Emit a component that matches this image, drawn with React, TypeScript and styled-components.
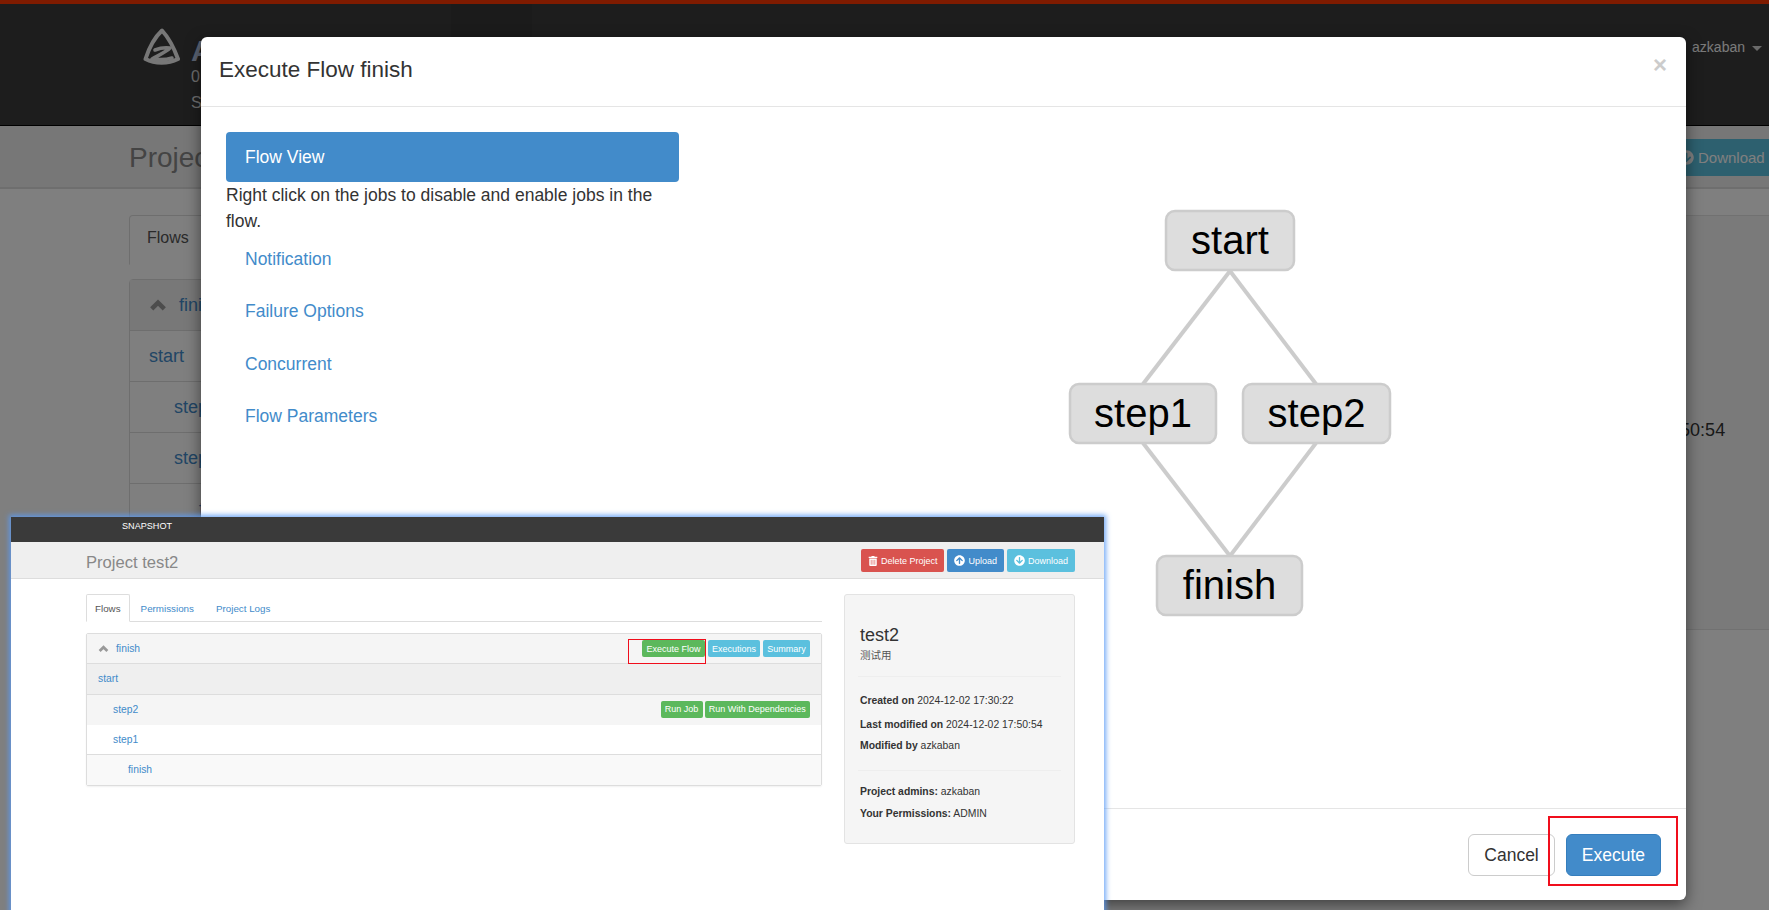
import React from "react";
import styled, { createGlobalStyle } from "styled-components";
import { FaTrashAlt, FaArrowCircleUp, FaArrowCircleDown } from "react-icons/fa";

const GlobalStyle = createGlobalStyle`
	html, body {
		margin: 0;
		padding: 0;
		overflow: hidden;
		background: #fff;
	}
	* {
		box-sizing: border-box;
	}
`;

const Screen = styled.div`
	position: relative;
	width: 1769px;
	height: 910px;
	overflow: hidden;
	font-family: "Liberation Sans", Arial, sans-serif;
	color: #333;
`;

/* page behind the dialog */
const TopBar = styled.header`
	display: flex;
	height: 126px;
	border-top: 4px solid #ff3601;
	border-bottom: 1px solid #000;
	background: #3a3a3a;
	padding-left: 142px;
`;

const Brand = styled.div`
	display: flex;
	gap: 9px;
	padding-top: 24px;
	width: 309px;
	svg {
		flex: none;
	}
	color: #fff;
	h1 {
		margin: 7px 0 0;
		font-size: 30px;
		line-height: 32px;
		color: #b8c8e6;
	}
	p {
		margin: 0;
		font-size: 16px;
		line-height: 20px;
		color: #ddd;
	}
	small {
		display: block;
		margin-top: 6px;
		font-size: 16px;
		line-height: 20px;
		color: #ddd;
	}
`;

const ActiveNav = styled.div`
	width: 81px;
	height: 33px;
	background: #363636;
`;

const UserMenu = styled.div`
	display: flex;
	align-items: flex-start;
	gap: 7px;
	margin-left: auto;
	padding: 33px 7px 0 0;
	font-size: 14px;
	line-height: 20px;
	color: #fff;
	opacity: 0.95;
	i {
		margin-top: 9px;
		border-top: 5px solid #ddd;
		border-left: 5px solid transparent;
		border-right: 5px solid transparent;
	}
`;

const ProjectBar = styled.div`
	display: flex;
	justify-content: space-between;
	align-items: flex-start;
	height: 63px;
	padding: 13px 0 0 129px;
	background: #efefef;
	border-bottom: 2px solid #ddd;
	h2 {
		margin: 2px 0 0;
		font-size: 28px;
		font-weight: 400;
		line-height: 34px;
		color: #888;
	}
`;

const BarDownload = styled.div`
	display: flex;
	align-items: center;
	gap: 4px;
	height: 37px;
	width: 120px;
	padding-left: 30px;
	background: #5bc0de;
	color: #fff;
	font-size: 15px;
	white-space: nowrap;
`;

const PageBody = styled.div`
	display: grid;
	grid-template-columns: 1150px 1fr;
	gap: 103px;
	padding: 26px 0 0 129px;
`;

const Tabs = styled.div`
	display: flex;
	height: 50px;
	border-bottom: 1px solid #ddd;
`;

const ActiveTab = styled.div`
	height: 50px;
	padding: 12px 17px;
	font-size: 16px;
	line-height: 20px;
	color: #555;
	background: #fff;
	border: 1px solid #ddd;
	border-bottom-color: #fff;
	border-radius: 4px 4px 0 0;
`;

const FlowPanel = styled.div`
	margin-top: 14px;
	border: 1px solid #ddd;
	border-radius: 4px 4px 0 0;
`;

const FlowHeading = styled.div`
	display: flex;
	align-items: center;
	gap: 12px;
	height: 51px;
	padding-left: 19px;
	background: #f0f0f0;
	border-bottom: 1px solid #ddd;
	font-size: 18px;
	color: #428bca;
`;

const FlowRow = styled.div<{ $indent: number }>`
	display: flex;
	align-items: center;
	height: 51px;
	padding-left: ${(p) => p.$indent}px;
	border-bottom: 1px solid #ddd;
	font-size: 18px;
	color: #428bca;
`;

const InfoCard = styled.aside`
	height: 415px;
	padding: 201px 0 0 27px;
	background: #f5f5f5;
	border-top: 1px solid #e3e3e3;
	border-bottom: 1px solid #e3e3e3;
	font-size: 18px;
	line-height: 26px;
`;

const Overlay = styled.div`
	position: absolute;
	inset: 0;
	background: rgba(0, 0, 0, 0.5);
`;

/* dialog */
const Modal = styled.section`
	position: absolute;
	left: 201px;
	top: 37px;
	width: 1485px;
	height: 863px;
	display: flex;
	flex-direction: column;
	background: #fff;
	border-radius: 6px;
	box-shadow: 0 5px 15px rgba(0, 0, 0, 0.5);
`;

const ModalHeader = styled.div`
	display: flex;
	justify-content: space-between;
	align-items: flex-start;
	height: 70px;
	padding: 19px 19px 0 18px;
	border-bottom: 1px solid #e5e5e5;
	h3 {
		margin: 0;
		font-size: 22.5px;
		font-weight: 400;
		line-height: 28px;
		color: #333;
	}
`;

const CloseGlyph = styled.span`
	font-size: 24px;
	font-weight: 700;
	line-height: 20px;
	margin-top: -1px;
	color: #ccc;
`;

const ModalBody = styled.div`
	flex: 1;
	display: flex;
	padding: 25px 0 0 25px;
`;

const SideNav = styled.nav`
	flex: none;
	width: 453px;
	font-size: 17.5px;
	line-height: 26px;
`;

const NavItem = styled.div<{ $active?: boolean }>`
	height: ${(p) => (p.$active ? 50 : 52.3)}px;
	padding: ${(p) => (p.$active ? 12 : 13)}px 19px;
	border-radius: 4px;
	color: ${(p) => (p.$active ? "#fff" : "#428bca")};
	background: ${(p) => (p.$active ? "#428bca" : "transparent")};
`;

const NavHint = styled.p`
	margin: 0 0 -1px;
	color: #333;
`;

const GraphSvg = styled.svg`
	flex: none;
	margin: 79px 0 0 391px;
	overflow: visible;
	text {
		font-size: 40px;
		fill: #000;
		text-anchor: middle;
	}
	rect {
		fill: #ddd;
		stroke: #ccc;
		stroke-width: 2.5px;
	}
	line {
		stroke: #ccc;
		stroke-width: 4px;
	}
`;

const ModalFooter = styled.div`
	display: flex;
	justify-content: flex-end;
	align-items: flex-start;
	gap: 11px;
	height: 92px;
	padding: 25px 25px 0 0;
	border-top: 1px solid #e5e5e5;
`;

const FooterButton = styled.div<{ $primary?: boolean }>`
	height: 42px;
	padding: 0 15px;
	display: flex;
	align-items: center;
	font-size: 17.5px;
	border-radius: 6px;
	color: ${(p) => (p.$primary ? "#fff" : "#333")};
	background: ${(p) => (p.$primary ? "#428bca" : "#fff")};
	border: 1px solid ${(p) => (p.$primary ? "#357ebd" : "#ccc")};
`;

const RedMark = styled.div<{ $top: number; $left: number; $w: number; $h: number; $b?: number }>`
	position: absolute;
	top: ${(p) => p.$top}px;
	left: ${(p) => p.$left}px;
	width: ${(p) => p.$w}px;
	height: ${(p) => p.$h}px;
	border: ${(p) => p.$b ?? 2}px solid #f00e1c;
	pointer-events: none;
`;

/* pasted screenshot lying over the dialog */
const Snapshot = styled.div`
	position: absolute;
	left: 11px;
	top: 517px;
	width: 1093px;
	height: 400px;
	background: #fff;
	box-shadow: 0 0 5px 2px rgba(90, 155, 245, 0.85);
	font-size: 10px;
`;

const SnapBar = styled.div`
	display: flex;
	height: 25px;
	background: #3a3a3a;
	color: #fff;
	padding: 3px 0 0 111px;
	font-size: 9.1px;
	line-height: 12px;
`;

const SnapTitleRow = styled.div`
	display: flex;
	align-items: flex-start;
	justify-content: space-between;
	height: 37px;
	padding: 7px 29px 0 75px;
	background: #efefef;
	border-bottom: 1px solid #ddd;
	h2 {
		margin: 4px 0 0;
		font-size: 16.6px;
		font-weight: 400;
		line-height: 20px;
		color: #888;
	}
`;

const SmallButtons = styled.div<{ $gap?: number }>`
	display: flex;
	gap: ${(p) => p.$gap ?? 3}px;
	align-items: center;
`;

const SmallButton = styled.div<{ $color: string; $h: number }>`
	display: flex;
	align-items: center;
	gap: 3px;
	height: ${(p) => p.$h}px;
	padding: 0 4.2px;
	border-radius: 2px;
	background: ${(p) => p.$color};
	color: #fff;
	font-size: 9px;
	white-space: nowrap;
`;

const TopButton = styled(SmallButton)`
	padding: 0 7px;
	font-size: 9px;
	svg {
		flex: none;
	}
`;

const SnapBody = styled.div`
	display: grid;
	grid-template-columns: 736px 231px;
	gap: 22px;
	padding: 15px 29px 0 75px;
`;

const SnapTabs = styled.div`
	display: flex;
	height: 28px;
	border-bottom: 1px solid #ddd;
`;

const SnapTab = styled.div<{ $active?: boolean }>`
	height: ${(p) => (p.$active ? 28 : 27)}px;
	padding: 8px ${(p) => (p.$active ? 8 : 10)}px;
	font-size: 9.8px;
	line-height: 12px;
	color: ${(p) => (p.$active ? "#555" : "#428bca")};
	background: #fff;
	border: 1px solid ${(p) => (p.$active ? "#ddd" : "transparent")};
	border-bottom-color: ${(p) => (p.$active ? "#fff" : "transparent")};
	border-radius: 2px 2px 0 0;
`;

const SnapPanel = styled.div`
	margin-top: 11px;
	border: 1px solid #ddd;
	border-radius: 2px;
	box-shadow: 0 1px 2px rgba(0, 0, 0, 0.06);
`;

const SnapRow = styled.div<{ $bg: string; $indent: number; $line?: boolean }>`
	display: flex;
	align-items: center;
	justify-content: space-between;
	height: 30.3px;
	padding: 0 11px 0 ${(p) => p.$indent}px;
	background: ${(p) => p.$bg};
	border-bottom: 1px solid ${(p) => (p.$line ? "#ddd" : "transparent")};
	color: #428bca;
	font-size: 10.3px;
`;

const RowName = styled.span`
	display: flex;
	align-items: center;
	gap: 7px;
`;

const SnapCard = styled.aside`
	height: 250px;
	padding: 30px 15px 0;
	background: #f5f5f5;
	border: 1px solid #e3e3e3;
	border-radius: 3px;
	font-size: 10px;
	h3 {
		margin: 0;
		font-size: 18px;
		font-weight: 400;
		line-height: 20px;
		color: #333;
	}
`;

const SnapDesc = styled.div`
	margin-top: 1px;
	height: 17px;
	font-family: "Noto Sans CJK SC", "Liberation Sans", sans-serif;
	font-size: 10.5px;
	line-height: 17px;
	color: #555;
`;

const CardRule = styled.hr<{ $space: number }>`
	margin: ${(p) => p.$space}px -2px 0;
	border: 0;
	border-top: 1px solid #eee;
`;

const CardLine = styled.div<{ $top: number }>`
	margin-top: ${(p) => p.$top}px;
	font-size: 10.4px;
	line-height: 12px;
	white-space: nowrap;
	color: #333;
	b {
		font-weight: 700;
	}
`;

function AzkabanLogo() {
	return (
		<svg width="40" height="38" viewBox="0 0 40 38" fill="none">
			<path
				d="M20 2.5 C26 9 32 20 36 31 C26 36 13 36 3.5 31 C7 20 13 9 20 2.5 Z"
				stroke="#eee"
				strokeWidth="4"
				strokeLinejoin="round"
			/>
			<path
				d="M13 22 C18 20 24 19.5 28 20 C24 24 17 27 10 31 C17 32 24 32 30 30"
				stroke="#eee"
				strokeWidth="3.6"
				strokeLinecap="round"
				strokeLinejoin="round"
			/>
		</svg>
	);
}

// solid glyphicon style chevron
function ChevronUp({ size }: { size: number }) {
	return (
		<svg width={size} height={size * 0.7} viewBox="0 0 20 14" fill="none">
			<polyline points="3,11 10,4 17,11" stroke="#999" strokeWidth="5" />
		</svg>
	);
}

const nodes = [
	{ label: "start", x: 0, y: 0, w: 128 },
	{ label: "step1", x: -96, y: 173, w: 146 },
	{ label: "step2", x: 77, y: 173, w: 147 },
	{ label: "finish", x: -9, y: 345, w: 145 },
];

function FlowGraph() {
	return (
		<GraphSvg width="320" height="410" viewBox="-96 0 320 410">
			<line x1="64" y1="60" x2="-23" y2="173" />
			<line x1="64" y1="60" x2="150" y2="173" />
			<line x1="-23" y1="232" x2="64" y2="345" />
			<line x1="150" y1="232" x2="64" y2="345" />
			{nodes.map((n) => (
				<g key={n.label}>
					<rect x={n.x} y={n.y} width={n.w} height={59} rx={9} />
					<text x={n.x + n.w / 2} y={n.y + 43}>
						{n.label}
					</text>
				</g>
			))}
		</GraphSvg>
	);
}

export default function App() {
	return (
		<Screen>
			<GlobalStyle />
			<TopBar>
				<Brand>
					<AzkabanLogo />
					<div>
						<h1>Azkaban</h1>
						<p>0.1.0</p>
						<small>SNAPSHOT</small>
					</div>
				</Brand>
				<ActiveNav />
				<UserMenu>
					azkaban <i />
				</UserMenu>
			</TopBar>
			<ProjectBar>
				<h2>Project test2</h2>
				<BarDownload>
					<FaArrowCircleDown size={15} /> Download
				</BarDownload>
			</ProjectBar>
			<PageBody>
				<div>
					<Tabs>
						<ActiveTab>Flows</ActiveTab>
					</Tabs>
					<FlowPanel>
						<FlowHeading>
							<ChevronUp size={18} /> finish
						</FlowHeading>
						<FlowRow $indent={19}>start</FlowRow>
						<FlowRow $indent={44}>step2</FlowRow>
						<FlowRow $indent={44}>step1</FlowRow>
						<FlowRow $indent={69}>finish</FlowRow>
					</FlowPanel>
				</div>
				<InfoCard>
					<b>Last modified on</b> 2024-12-02 17:50:54
				</InfoCard>
			</PageBody>
			<Overlay />

			<Modal>
				<ModalHeader>
					<h3>Execute Flow finish</h3>
					<CloseGlyph>×</CloseGlyph>
				</ModalHeader>
				<ModalBody>
					<SideNav>
						<NavItem $active>Flow View</NavItem>
						<NavHint>Right click on the jobs to disable and enable jobs in the flow.</NavHint>
						<NavItem>Notification</NavItem>
						<NavItem>Failure Options</NavItem>
						<NavItem>Concurrent</NavItem>
						<NavItem>Flow Parameters</NavItem>
					</SideNav>
					<FlowGraph />
				</ModalBody>
				<ModalFooter>
					<FooterButton>Cancel</FooterButton>
					<FooterButton $primary>Execute</FooterButton>
				</ModalFooter>
			</Modal>
			<RedMark $top={816} $left={1548} $w={130} $h={70} />

			<Snapshot>
				<SnapBar>SNAPSHOT</SnapBar>
				<SnapTitleRow>
					<h2>Project test2</h2>
					<SmallButtons>
						<TopButton $color="#d9534f" $h={23}>
							<FaTrashAlt size={10} /> Delete Project
						</TopButton>
						<TopButton $color="#428bca" $h={23}>
							<FaArrowCircleUp size={11} /> Upload
						</TopButton>
						<TopButton $color="#5bc0de" $h={23}>
							<FaArrowCircleDown size={11} /> Download
						</TopButton>
					</SmallButtons>
				</SnapTitleRow>
				<SnapBody>
					<div>
						<SnapTabs>
							<SnapTab $active>Flows</SnapTab>
							<SnapTab>Permissions</SnapTab>
							<SnapTab>Project Logs</SnapTab>
						</SnapTabs>
						<SnapPanel>
							<SnapRow $bg="#f5f5f5" $indent={11} $line>
								<RowName>
									<ChevronUp size={11} /> finish
								</RowName>
								<SmallButtons>
									<SmallButton $color="#5cb85c" $h={17}>Execute Flow</SmallButton>
									<SmallButton $color="#5bc0de" $h={17}>Executions</SmallButton>
									<SmallButton $color="#5bc0de" $h={17}>Summary</SmallButton>
								</SmallButtons>
							</SnapRow>
							<SnapRow $bg="#efefef" $indent={11} $line>start</SnapRow>
							<SnapRow $bg="#f5f5f5" $indent={26}>
								step2
								<SmallButtons $gap={2}>
									<SmallButton $color="#5cb85c" $h={17}>Run Job</SmallButton>
									<SmallButton $color="#5cb85c" $h={17}>Run With Dependencies</SmallButton>
								</SmallButtons>
							</SnapRow>
							<SnapRow $bg="#fff" $indent={26} $line>step1</SnapRow>
							<SnapRow $bg="#f9f9f9" $indent={41}>finish</SnapRow>
						</SnapPanel>
					</div>
					<SnapCard>
						<h3>test2</h3>
						<SnapDesc>测试用</SnapDesc>
						<CardRule $space={13} />
						<CardLine $top={18}>
							<b>Created on</b> 2024-12-02 17:30:22
						</CardLine>
						<CardLine $top={12}>
							<b>Last modified on</b> 2024-12-02 17:50:54
						</CardLine>
						<CardLine $top={9}>
							<b>Modified by</b> azkaban
						</CardLine>
						<CardRule $space={18} />
						<CardLine $top={15}>
							<b>Project admins:</b> azkaban
						</CardLine>
						<CardLine $top={10}>
							<b>Your Permissions:</b> ADMIN
						</CardLine>
					</SnapCard>
				</SnapBody>
				<RedMark $top={122} $left={617} $w={78} $h={25} $b={1} />
			</Snapshot>
		</Screen>
	);
}
